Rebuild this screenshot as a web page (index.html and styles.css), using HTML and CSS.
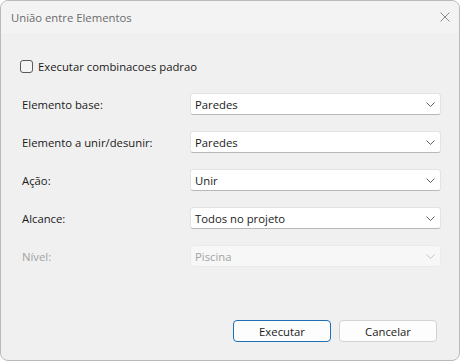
FILE: index.html
```html
<!DOCTYPE html>
<html>
<head>
    <title>União entre Elementos</title>
    <meta charset="utf-8">
    <link rel="stylesheet" href="styles.css">
</head>
<body>
    <div class="dialog">
        <div class="title-bar">
            <span class="title">União entre Elementos</span>
            <svg class="close-icon" width="10" height="10" viewBox="0 0 10 10">
                <path d="M0.5 0.5 L9.5 9.5 M9.5 0.5 L0.5 9.5" stroke="#8a8a8a" stroke-width="1" fill="none"/>
            </svg>
        </div>

        <div class="content">
            <label class="check-row">
                <span class="check-box"></span>
                <span>Executar combinacoes padrao</span>
            </label>

            <div class="form-grid">
                <div class="field-label">Elemento base:</div>
                <div class="combo"><span>Paredes</span><svg class="chevron" width="9" height="5" viewBox="0 0 9 5"><path d="M0.5 0.5 L4.5 4.5 L8.5 0.5" stroke="#606060" fill="none"/></svg></div>

                <div class="field-label">Elemento a unir/desunir:</div>
                <div class="combo"><span>Paredes</span><svg class="chevron" width="9" height="5" viewBox="0 0 9 5"><path d="M0.5 0.5 L4.5 4.5 L8.5 0.5" stroke="#606060" fill="none"/></svg></div>

                <div class="field-label">Ação:</div>
                <div class="combo"><span>Unir</span><svg class="chevron" width="9" height="5" viewBox="0 0 9 5"><path d="M0.5 0.5 L4.5 4.5 L8.5 0.5" stroke="#606060" fill="none"/></svg></div>

                <div class="field-label">Alcance:</div>
                <div class="combo"><span>Todos no projeto</span><svg class="chevron" width="9" height="5" viewBox="0 0 9 5"><path d="M0.5 0.5 L4.5 4.5 L8.5 0.5" stroke="#606060" fill="none"/></svg></div>

                <div class="field-label disabled">Nível:</div>
                <div class="combo combo-disabled"><span>Piscina</span><svg class="chevron" width="9" height="5" viewBox="0 0 9 5"><path d="M0.5 0.5 L4.5 4.5 L8.5 0.5" stroke="#c4c4c4" fill="none"/></svg></div>
            </div>
        </div>

        <div class="footer">
            <button class="btn btn-default">Executar</button>
            <button class="btn">Cancelar</button>
        </div>
    </div>
</body>
</html>
```

FILE: styles.css
```css
body {
    margin: 0;
    background-color: #ffffff;
    font-family: "Open Sans", "Noto Sans", Arial, sans-serif;
    font-size: 11.3px;
    color: #1a1a1a;
}
.dialog {
    width: 458px;
    height: 359px;
    border: 1px solid #b9b9b9;
    border-radius: 8px;
    background-color: #f0f0f0;
    display: flex;
    flex-direction: column;
    overflow: hidden;
}
.title-bar {
    height: 32px;
    display: flex;
    align-items: center;
    justify-content: space-between;
    padding: 0 9px 0 10px;
    background-color: #f3f3f3;
}
.title {
    color: #6b6b6b;
}
.content {
    padding: 26px 0 0 19px;
    flex: 1;
}
.check-row {
    display: flex;
    align-items: center;
    gap: 5px;
    height: 14px;
}
.check-box {
    width: 11px;
    height: 11px;
    border: 1px solid #5a5a5a;
    border-radius: 3px;
    background-color: #f4f4f4;
}
.form-grid {
    margin-top: 20px;
    display: grid;
    grid-template-columns: 168px 251px;
    grid-auto-rows: 22px;
    row-gap: 16px;
    padding-left: 2px;
}
.field-label {
    display: flex;
    align-items: center;
}
.field-label.disabled {
    color: #a2a2a2;
}
.combo {
    display: flex;
    align-items: center;
    justify-content: space-between;
    box-sizing: border-box;
    padding: 0 5px 0 4px;
    background-color: #ffffff;
    border: 1px solid #e3e3e3;
    border-bottom-color: #b8b8b8;
    border-radius: 3px;
}
.combo-disabled {
    background-color: #f7f7f7;
    border-color: #ebebeb;
    color: #a2a2a2;
}
.footer {
    display: flex;
    justify-content: flex-end;
    gap: 8px;
    padding: 0 22px 18px 0;
}
.btn {
    width: 98px;
    height: 22px;
    font-family: inherit;
    font-size: 11.3px;
    color: #1a1a1a;
    background-color: #fdfdfd;
    border: 1px solid #d2d2d2;
    border-radius: 4px;
}
.btn-default {
    border-color: #1f6fb5;
}
```
